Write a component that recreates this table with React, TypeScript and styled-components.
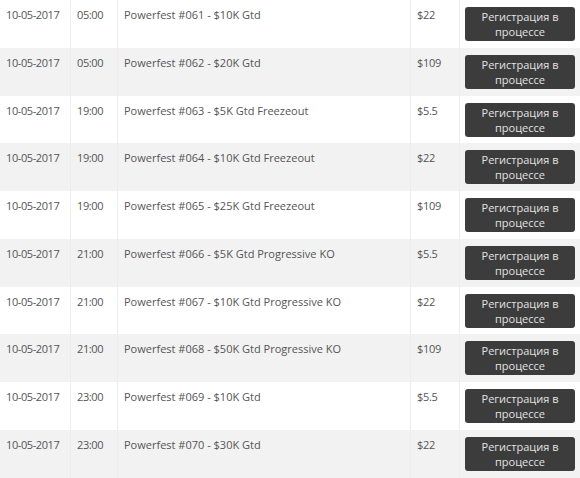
import React from "react";
import styled, { createGlobalStyle } from "styled-components";

const Global = createGlobalStyle`
  html, body { margin: 0; padding: 0; background: #ffffff; }
  body { font-family: "Open Sans", "Liberation Sans", sans-serif; }
`;

const Table = styled.div`
  width: 580px;
  display: flex;
  flex-direction: column;
`;

const Row = styled.div<{ $alt: boolean }>`
  display: grid;
  grid-template-columns: 71px 47px 293px 49px 120px;
  height: 47.78px;
  background: ${(p) => (p.$alt ? "#f2f2f2" : "#ffffff")};
`;

const Cell = styled.div<{ $tight?: number }>`
  padding: 7px 5px 0 6px;
  font-size: 11px;
  line-height: 16px;
  color: #555555;
  letter-spacing: ${(p) => (p.$tight ? `${-p.$tight}px` : "0")};
  border-right: 1px solid #ededed;
  white-space: nowrap;
  overflow: hidden;
`;

const ButtonCell = styled.div`
  padding: 7px 5px 0 5px;
`;

const Button = styled.div`
  height: 34px;
  background: #3c3c3c;
  border-radius: 3px;
  color: #e2e2e2;
  font-size: 11px;
  line-height: 15px;
  text-align: center;
  display: flex;
  align-items: center;
  justify-content: center;
`;

const rows = [
  ["05:00", "Powerfest #061 - $10K Gtd", "$22"],
  ["05:00", "Powerfest #062 - $20K Gtd", "$109"],
  ["19:00", "Powerfest #063 - $5K Gtd Freezeout", "$5.5"],
  ["19:00", "Powerfest #064 - $10K Gtd Freezeout", "$22"],
  ["19:00", "Powerfest #065 - $25K Gtd Freezeout", "$109"],
  ["21:00", "Powerfest #066 - $5K Gtd Progressive KO", "$5.5"],
  ["21:00", "Powerfest #067 - $10K Gtd Progressive KO", "$22"],
  ["21:00", "Powerfest #068 - $50K Gtd Progressive KO", "$109"],
  ["23:00", "Powerfest #069 - $10K Gtd", "$5.5"],
  ["23:00", "Powerfest #070 - $30K Gtd", "$22"],
];

export default function App() {
  return (
    <>
      <Global />
      <Table>
        {rows.map((r, i) => (
          <Row key={i} $alt={i % 2 === 1}>
            <Cell $tight={0.4}>10-05-2017</Cell>
            <Cell $tight={0.4}>{r[0]}</Cell>
            <Cell>{r[1]}</Cell>
            <Cell $tight={0.3}>{r[2]}</Cell>
            <ButtonCell>
              <Button>
                Регистрация в
                <br />
                процессе
              </Button>
            </ButtonCell>
          </Row>
        ))}
      </Table>
    </>
  );
}
